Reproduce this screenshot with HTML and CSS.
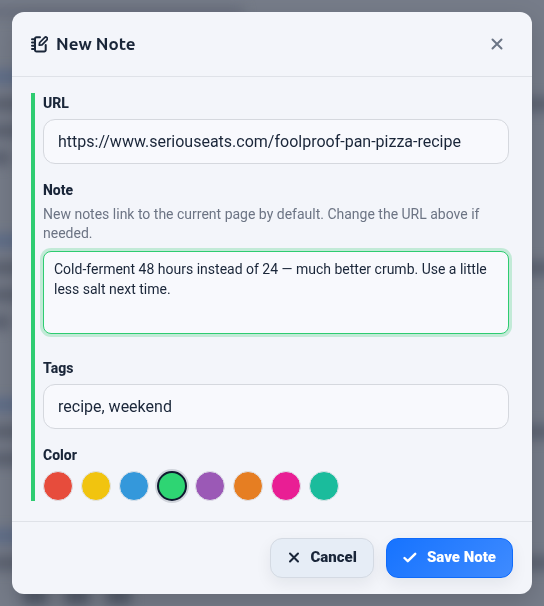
FILE: index.html
```html
<!DOCTYPE html>
<html lang="en">
<head>
  <meta charset="UTF-8">
  <meta name="viewport" content="width=device-width, initial-scale=1.0">
  <title>New Note</title>
  <link rel="stylesheet" href="styles.css">
</head>
<body>
  <!-- Page content, blurred behind the dialog -->
  <div class="page" aria-hidden="true">
    <div class="page-top"></div>
    <div class="item">
      <div class="line link"></div>
      <div class="line"></div>
      <div class="line part"></div>
      <div class="line short"></div>
    </div>
    <div class="item">
      <div class="line link"></div>
      <div class="line"></div>
      <div class="line part"></div>
      <div class="line short"></div>
    </div>
    <div class="item compact">
      <div class="line link"></div>
      <div class="line"></div>
      <div class="line part"></div>
    </div>
    <div class="item">
      <div class="line link"></div>
      <div class="line"></div>
      <div class="tags"><span></span><span></span><span></span></div>
    </div>
  </div>

  <div class="overlay">
    <form class="modal" role="dialog" aria-labelledby="modal-title">
      <header class="modal-header">
        <svg class="title-icon" viewBox="0 0 17 17" aria-hidden="true">
          <path d="M9 1.300H5.500A1.500 1.500 0 0 0 4 2.800v11.200a1.500 1.500 0 0 0 1.500 1.500h7.700a1.500 1.500 0 0 0 1.500-1.500V9"/>
          <path d="M1 3.300h3M1 6.500h3M1 9.700h3M1 12.900h3"/>
          <path class="pen" d="M8.200 9.200l.5-2.700 4.900-4.900a1.600 1.600 0 0 1 2.300 2.300L11 8.800z"/>
        </svg>
        <h1 id="modal-title">New Note</h1>
        <button type="button" class="close" aria-label="Close">
          <svg viewBox="0 0 12 12" aria-hidden="true"><path d="M1.500 1.500l9 9M10.500 1.500l-9 9"/></svg>
        </button>
      </header>

      <div class="modal-body">
        <div class="fields">
          <div class="field">
            <label for="url">URL</label>
            <input class="text-input" type="text" id="url" value="https://www.seriouseats.com/foolproof-pan-pizza-recipe">
          </div>
          <div class="field">
            <label for="note">Note</label>
            <p class="hint">New notes link to the current page by default. Change the URL above if needed.</p>
            <textarea class="note-input" id="note">Cold-ferment 48 hours instead of 24 — much better crumb. Use a little less salt next time.</textarea>
          </div>
          <div class="field">
            <label for="tags">Tags</label>
            <input class="text-input" type="text" id="tags" value="recipe, weekend">
          </div>
          <fieldset class="field colors">
            <legend>Color</legend>
            <div class="swatches">
              <input type="radio" name="color" class="swatch red" aria-label="Red">
              <input type="radio" name="color" class="swatch yellow" aria-label="Yellow">
              <input type="radio" name="color" class="swatch blue" aria-label="Blue">
              <input type="radio" name="color" class="swatch green" aria-label="Green" checked>
              <input type="radio" name="color" class="swatch purple" aria-label="Purple">
              <input type="radio" name="color" class="swatch orange" aria-label="Orange">
              <input type="radio" name="color" class="swatch pink" aria-label="Pink">
              <input type="radio" name="color" class="swatch teal" aria-label="Teal">
            </div>
          </fieldset>
        </div>
      </div>

      <footer class="modal-footer">
        <button type="button" class="btn btn-cancel">
          <svg viewBox="0 0 14 14" aria-hidden="true"><path d="M3 3.500l8 8M11 3.500l-8 8"/></svg>
          Cancel
        </button>
        <button type="submit" class="btn btn-save">
          <svg viewBox="0 0 14 14" aria-hidden="true"><path class="check" d="M1.500 8l3.300 3.200 7.400-7.400"/></svg>
          Save Note
        </button>
      </footer>
    </form>
  </div>
</body>
</html>
```
FILE: styles.css
```css
* {
  box-sizing: border-box;
}

body {
  margin: 0;
  font-family: Roboto, "Liberation Sans", sans-serif;
  color: #1a2639;
  background: #767c89;
}

/* Blurred page */
.page {
  position: fixed;
  inset: 0 -20px;
  overflow: hidden;
  filter: blur(6px);
}

.page-top {
  width: 45%;
  height: 12px;
  margin: 6px 0 52px;
  background: #686e7c;
}

.item {
  height: 164px;
}

.item.compact {
  height: 131px;
}

.line {
  height: 14px;
  margin-bottom: 13px;
  background: #5b6170;
}

.line.link {
  width: 60%;
  background: #5d6c88;
}

.line.part {
  width: 90%;
}

.line.short {
  width: 30px;
}

.tags {
  display: flex;
  gap: 18px;
  padding: 0 43px;
}

.tags span {
  width: 24px;
  height: 22px;
  background: #535b6a;
}

/* Dialog */
.overlay {
  position: relative;
  min-height: 100vh;
  padding: 12px;
}

.modal {
  border-radius: 12px;
  background: #f3f5fa;
  box-shadow: 0 8px 24px rgba(0, 0, 0, 0.15);
}

.modal-header {
  display: flex;
  align-items: center;
  gap: 8px;
  padding: 16px 19px;
  border-bottom: 1px solid #dfe2e8;
}

.modal-header h1 {
  flex: 1;
  margin: 0;
  font-family: Ubuntu, "Noto Sans", sans-serif;
  font-size: 17px;
  line-height: 32px;
  font-weight: 600;
}

svg {
  fill: none;
  stroke: currentColor;
  stroke-width: 2;
  stroke-linecap: round;
  stroke-linejoin: round;
}

.title-icon {
  width: 17px;
  height: 17px;
}

.title-icon .pen {
  stroke-width: 1.7;
}

.close {
  display: flex;
  align-items: center;
  justify-content: center;
  width: 32px;
  height: 32px;
  padding: 0;
  border: 0;
  background: none;
  color: #6b7585;
}

.close svg {
  width: 12px;
  height: 12px;
}

.modal-body {
  padding: 16px 19px 20px;
}

.fields {
  padding: 0 4px 0 8px;
  border-left: 4px solid #2ecc71;
}

.field {
  margin: 0 0 16px;
  padding: 0;
  border: 0;
}

.field label,
.field legend {
  display: block;
  padding: 0;
  font-size: 14px;
  line-height: 20px;
  font-weight: 800;
}

.text-input {
  display: block;
  width: 100%;
  height: 45px;
  margin-top: 6px;
  padding: 0 14px;
  border: 1px solid #d5d8de;
  border-radius: 12px;
  background: #f8f9fd;
  color: inherit;
  font: 16px Roboto, "Liberation Sans", sans-serif;
}

.hint {
  margin: 5px 0 8px;
  color: #6c7484;
  font-size: 14px;
  line-height: 19px;
}

.note-input {
  display: block;
  width: 100%;
  height: 83px;
  margin-bottom: 24px;
  padding: 7px 10px;
  border: 1px solid #2ecc71;
  border-radius: 8px;
  outline: 0;
  resize: none;
  background: #f8f9fd;
  box-shadow: 0 0 0 3px rgba(46, 204, 113, 0.25);
  color: inherit;
  font: 14px/20px Roboto, "Liberation Sans", sans-serif;
}

.colors {
  margin-bottom: 0;
}

.swatches {
  display: flex;
  gap: 8px;
  padding: 6px 0 0;
}

.swatch {
  width: 30px;
  height: 30px;
  margin: 0;
  appearance: none;
  border: 1px solid #e0e3e9;
  border-radius: 50%;
}

.swatch:checked {
  border: 2px solid #101a30;
  box-shadow: 0 0 0 2px rgba(16, 26, 48, 0.15);
}

.red { background: #e74c3c; }
.yellow { background: #f1c40f; }
.blue { background: #3498db; }
.green { background: #2ed573; }
.purple { background: #9b59b6; }
.orange { background: #e67e22; }
.pink { background: #e91e94; }
.teal { background: #1abc9c; }

.modal-footer {
  display: flex;
  justify-content: flex-end;
  gap: 12px;
  padding: 16px 19px;
  border-top: 1px solid #dfe2e8;
}

.btn {
  display: flex;
  align-items: center;
  gap: 10px;
  height: 40px;
  padding: 0 16px 2px;
  border: 1px solid;
  border-radius: 12px;
  box-shadow: 0 6px 16px rgba(16, 26, 48, 0.07);
  font: 900 15px Roboto, "Liberation Sans", sans-serif;
}

.btn svg {
  width: 14px;
  height: 14px;
}

.btn .check {
  stroke-width: 2.4;
}

.btn-cancel {
  border-color: #d4dae3;
  background: #e6edf6;
  color: #1a2639;
}

.btn-save {
  border-color: #0f6bfb;
  background: linear-gradient(135deg, #1673ff, #3f8bff);
  color: #fff;
}
```
